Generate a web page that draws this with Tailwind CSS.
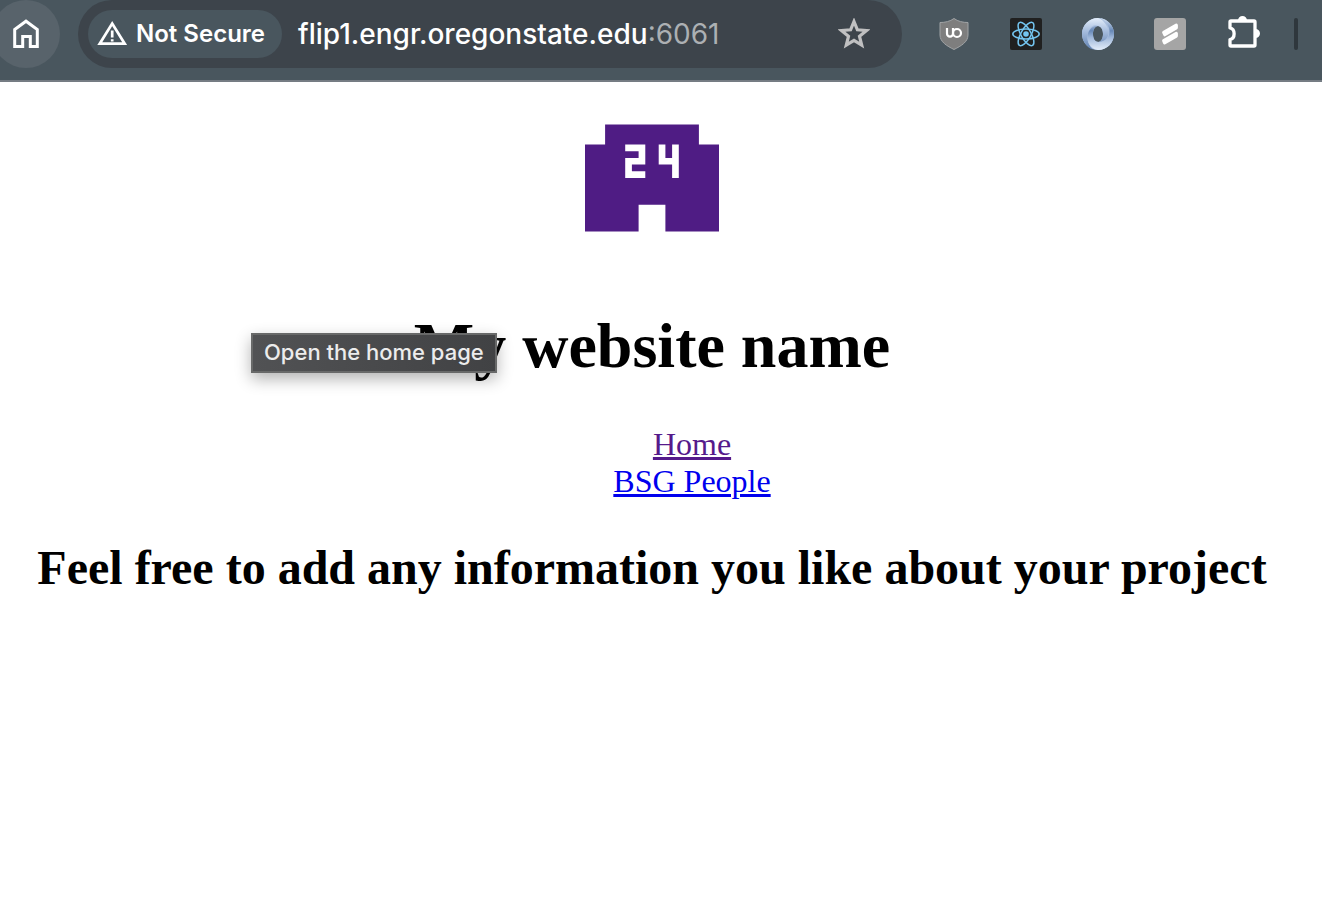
<!DOCTYPE html>
<html lang="en">
<head>
<meta charset="utf-8">
<meta name="viewport" content="width=device-width, initial-scale=1">
<title>My website name</title>
<script src="https://cdn.jsdelivr.net/npm/@tailwindcss/browser@4"></script>
</head>
<body class="min-h-screen bg-white text-black font-['Liberation_Serif',serif]">
<header class="flex items-start h-[82px] border-b-2 border-[#757c83] bg-[#49565e] overflow-hidden font-[Inter,sans-serif]">
  <button aria-label="Home" class="-ml-2 mr-[18px] size-[68px] shrink-0 rounded-full bg-[#58636b] flex items-center justify-center">
    <svg class="size-8" viewBox="0 0 32 32" fill="none" stroke="#fff" stroke-width="3"><path d="M4.700 11.500L16 3.200L27.300 11.500V28.500H20.300V18.500H12.700V28.500H4.700Z"/></svg>
  </button>
  <div class="flex flex-1 min-w-0 items-center h-[68px] rounded-full bg-[#3d444b] pl-[10px] pr-8">
    <button class="flex shrink-0 items-center gap-2 h-12 rounded-full bg-[#49565e] pl-[9px] pr-[17px] text-2xl font-semibold text-white whitespace-nowrap">
      <svg class="w-[31px] h-7" viewBox="0 0 31 28" fill="none" stroke="#fff" stroke-width="2.700"><path d="M2.700 23.700L15.200 3.500L27.700 23.700Z"/><path d="M15.200 10.500V17.500M15.200 19.300V21.500"/></svg>
      Not Secure
    </button>
    <div class="ml-4 flex-1 min-w-0 text-[28px] leading-9 font-medium text-white whitespace-nowrap">flip1.engr.oregonstate.edu<span class="text-[#acb0b3] font-normal">:6061</span></div>
    <button aria-label="Bookmark this page" class="shrink-0">
      <svg class="size-8" viewBox="0 0 32 32" fill="none" stroke="#c0c0c1" stroke-width="3.200"><path d="M16 3.500L19.400 11.800L28.500 12.500L21.500 18.300L23.700 27.100L16 22.300L8.300 27.100L10.500 18.300L3.500 12.500L12.600 11.800Z"/></svg>
    </button>
  </div>
  <nav aria-label="Extensions" class="ml-9 mr-6 flex shrink-0 items-center h-[68px] gap-10">
    <button aria-label="uBlock Origin">
      <svg class="size-8" viewBox="0 0 32 32"><path d="M16 .500C12 3.500 7 4.500 2 4.500V17C2 24 9 28 16 31.500C23 28 30 24 30 17V4.500C25 4.500 20 3.500 16 .500Z" fill="#7e7e7e" stroke="#a1a4a6"/><g fill="none" stroke="#fff" stroke-width="2.200"><path d="M9 10V15.500A3 3.200 0 0 0 15 15.500V10"/><circle cx="19" cy="15" r="4"/></g></svg>
    </button>
    <button aria-label="React Developer Tools">
      <svg class="size-8" viewBox="0 0 32 32"><rect width="32" height="32" rx="2" fill="#202020"/><circle cx="16" cy="16" r="2.800" fill="#74c5f0"/><g fill="none" stroke="#74c5f0" stroke-width="1.500"><ellipse cx="16" cy="16" rx="13.200" ry="5"/><ellipse cx="16" cy="16" rx="13.200" ry="5" transform="rotate(60 16 16)"/><ellipse cx="16" cy="16" rx="13.200" ry="5" transform="rotate(120 16 16)"/></g></svg>
    </button>
    <button aria-label="JSON Viewer">
      <svg class="size-8" viewBox="0 0 32 32">
        <defs><linearGradient id="ringA" x1="0" y1="0" x2="0" y2="1"><stop stop-color="#d4e1f2"/><stop offset=".4" stop-color="#6788b7"/><stop offset=".6" stop-color="#9db6d9"/><stop offset="1" stop-color="#e4eefa"/></linearGradient><linearGradient id="ringB" x1="0" y1="0" x2="0" y2="1"><stop stop-color="#e4eefa"/><stop offset=".4" stop-color="#a9bfdf"/><stop offset="1" stop-color="#6182b2"/></linearGradient></defs>
        <path d="M16 0A16 16 0 1 1 16 32A16 16 0 1 1 16 0ZM16 8C12.500 8 11 12 11 16S12.500 24 16 24S21 20 21 16S19.500 8 16 8Z" fill="#a9bfdf" fill-rule="evenodd"/>
        <path d="M16 0C7 0 0 7 0 16C0 23 5 30 11 31.500C5 26 4 18 7 12C9 8 13 6 16 8C20 9 21 13 21 16C21 20 19 24 16 24C25 24 28 17 26 11C24 5 20 1 16 0Z" fill="url(#ringB)"/>
        <path d="M18 0C26 1 32 8 32 16C32 25 25 32 16 32C10 31 6 27 5.500 20C5 13 10 7 16 8C12 9 11 13 11 16C11 21 13 24 17 24C25 24 29 17 27 10C25 5 22 2 18 0Z" fill="url(#ringA)"/>
      </svg>
    </button>
    <button aria-label="Scribe">
      <svg class="size-8" viewBox="0 0 32 32"><rect width="32" height="32" rx="3" fill="#a5a5a5"/><path d="M9.700 14.300L22.300 7.200V9.800L10.800 16.700ZM9.700 22.700L22.300 15.500V18L10.500 24.800Z" fill="#fff" stroke="#fff" stroke-width="3.200" stroke-linejoin="round"/></svg>
    </button>
    <button aria-label="Extensions menu">
      <svg class="w-[36px] h-9" viewBox="0 0 36 36" fill="none"><path d="M5 5H28Q29 5 29 6V29Q29 30 28 30H5Q4 30 4 29V23.500C9.500 22.500 9.500 13 4 12V6Q4 5 5 5Z" stroke="#fff" stroke-width="3.300" stroke-linejoin="round"/><path d="M12 4.500A4.500 4.500 0 0 1 21 4.500ZM29.500 13A4.500 4.500 0 0 1 29.500 22Z" fill="#fff"/></svg>
    </button>
    <span class="-ml-2 w-1 h-8 rounded-full bg-[#2f373d]"></span>
  </nav>
</header>
<main class="pt-[42px] pr-[18px] text-center">
  <svg class="mx-auto w-[134px] h-[108px]" viewBox="0 0 20 16" role="img" aria-label="24 hour store"><path fill="#4f1c84" fill-rule="evenodd" d="M3 0H17V3H20V16H12V12H8V16H0V3H3ZM6 3V4H8V5H6V8H9V7H7V6H9V3ZM11 3V6H13V8H14V3H13V5H12V3Z"/></svg>
  <div class="relative mt-[77px]">
    <h1 class="text-[64px] leading-[74px] font-bold">My website name</h1>
    <div role="tooltip" class="absolute left-[251px] top-6 h-10 px-[11px] pb-[2px] flex items-center border-2 border-[#686969] bg-linear-to-r from-[#515254] to-[#414244] shadow-[0_6px_16px_rgba(0,0,0,0.3)] text-[22px] leading-7 font-medium text-[#ececec] whitespace-nowrap font-[Inter,sans-serif]">Open the home page</div>
  </div>
  <ul class="mt-[43px] pl-20 text-[32px] leading-[37px]">
    <li><a href="#" class="text-[#551a8b] underline">Home</a></li>
    <li><a href="#people" class="text-[#0000ee] underline">BSG People</a></li>
  </ul>
  <h2 class="mt-10 text-5xl leading-[55px] font-bold">Feel free to add any information you like about your project</h2>
</main>
</body>
</html>
